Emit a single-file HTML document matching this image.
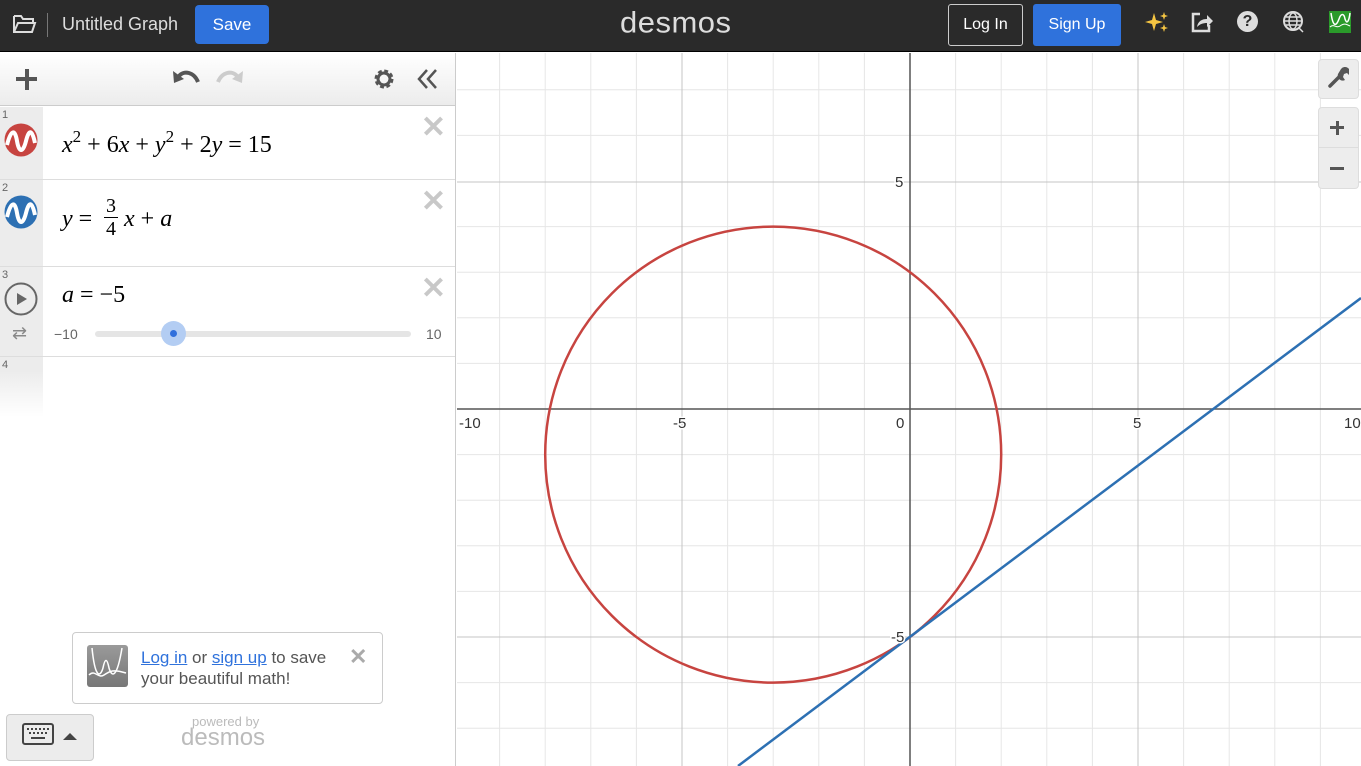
<!DOCTYPE html>
<html><head><meta charset="utf-8"><style>
*{box-sizing:border-box;margin:0;padding:0}
body{width:1361px;height:766px;overflow:hidden;font-family:"Liberation Sans",sans-serif;background:#fff;position:relative}
.top{position:absolute;left:0;top:0;width:1361px;height:52px;background:#2a2a2a;border-bottom:1px solid #000}
.abs{position:absolute}
.math{font-family:"Liberation Serif",serif;font-size:24px;color:#000;white-space:nowrap}
.math i{font-style:italic}
.math sup{font-size:17px;vertical-align:10px;line-height:0}
.x{position:absolute;right:9px;color:#c8c8c8;font-size:30px;font-weight:bold;line-height:1}
.num{position:absolute;left:2px;font-size:11px;color:#666}
.gut{position:absolute;left:0;width:43px;background:#ececec}
.row{position:absolute;left:0;width:455px;border-bottom:1px solid #ddd}
</style></head><body>
<div class="top">
 <svg class="abs" style="left:12px;top:13px" width="25" height="22" viewBox="0 0 25 22"><path d="M2 3h7l2 3h10v4M2 3v16h18l3-9H6L2 19" fill="none" stroke="#ddd" stroke-width="2"/></svg>
 <div class="abs" style="left:47px;top:13px;width:1px;height:24px;background:#777"></div>
 <div class="abs" style="left:62px;top:14px;color:#ddd;font-size:18px">Untitled Graph</div>
 <div class="abs" style="left:195px;top:5px;width:74px;height:39px;background:#2f72dc;border-radius:4px;color:#fff;font-size:17px;text-align:center;line-height:39px">Save</div>
 <div class="abs" style="left:620px;top:5px;color:#ddd;font-size:31px;letter-spacing:0.5px;transform:scaleY(0.95)">desmos</div>
 <div class="abs" style="left:948px;top:4px;width:75px;height:42px;border:1px solid #ccc;border-radius:3px;color:#fff;font-size:16px;text-align:center;line-height:40px">Log In</div>
 <div class="abs" style="left:1033px;top:4px;width:88px;height:42px;background:#2f72dc;border-radius:3px;color:#fff;font-size:16px;text-align:center;line-height:42px">Sign Up</div>
 <svg class="abs" style="left:1145px;top:11px" width="24" height="22" viewBox="0 0 24 22"><path d="M9 2l2 7 7 2-7 2-2 7-2-7-7-2 7-2z M19 1l1 3 3 1-3 1-1 3-1-3-3-1 3-1z M19 13l1 3 3 1-3 1-1 3-1-3-3-1 3-1z" fill="#f5c542"/></svg>
 <svg class="abs" style="left:1190px;top:11px" width="24" height="22" viewBox="0 0 24 22"><path d="M10 3H3v17h16v-6" fill="none" stroke="#ddd" stroke-width="2.5"/><path d="M7 16c1-6 5-8 10-8V4l6 6-6 6v-4c-4 0-7 1-10 4z" fill="#ddd"/></svg>
 <div class="abs" style="left:1237px;top:11px;width:21px;height:21px;border-radius:50%;background:#ddd;color:#2a2a2a;font-weight:bold;font-size:16px;text-align:center;line-height:21px">?</div>
 <svg class="abs" style="left:1282px;top:10px" width="24" height="24" viewBox="0 0 24 24"><circle cx="11" cy="11" r="9" fill="none" stroke="#ddd" stroke-width="2"/><ellipse cx="11" cy="11" rx="4" ry="8" fill="none" stroke="#ddd" stroke-width="1.5"/><path d="M3 11h16M4 7h14M4 15h14M17 18l4 4" stroke="#ddd" stroke-width="1.5"/></svg>
 <svg class="abs" style="left:1329px;top:11px" width="22" height="22" viewBox="0 0 22 22"><rect width="22" height="22" fill="#2a9a2a"/><path d="M2 2c2 14 5 14 8 6 2-6 5-6 6 0 2 6 4 2 5-6" fill="none" stroke="#fff" stroke-width="1.5"/><path d="M1 16c4-4 6 2 10-1s6-2 10 0" fill="none" stroke="#fff" stroke-width="1"/></svg>
</div>
<!-- left panel -->
<div class="abs" style="left:0;top:53px;width:456px;height:713px;border-right:1px solid #ccc;background:#fff">
 <div class="abs" style="left:0;top:0;width:455px;height:53px;background:linear-gradient(#fff,#ececec);border-bottom:1px solid #ccc"></div>
 <div class="abs" style="left:16px;top:24px;width:21px;height:4px;background:#555"></div>
 <div class="abs" style="left:24.5px;top:15.5px;width:4px;height:21px;background:#555"></div>
 <svg class="abs" style="left:172px;top:15px" width="28" height="18" viewBox="0 0 28 18"><path d="M26 14C22 4 12 2 7 8" fill="none" stroke="#555" stroke-width="4"/><path d="M1 3l1 12 10-4z" fill="#555"/></svg>
 <svg class="abs" style="left:216px;top:15px" width="28" height="18" viewBox="0 0 28 18"><path d="M2 14C6 4 16 2 21 8" fill="none" stroke="#ccc" stroke-width="4"/><path d="M27 3l-1 12-10-4z" fill="#ccc"/></svg>
 <svg class="abs" style="left:373px;top:15px" width="22" height="22" viewBox="0 0 22 22"><circle cx="11" cy="11" r="7" fill="none" stroke="#555" stroke-width="5" stroke-dasharray="3.3 2.2"/><circle cx="11" cy="11" r="6" fill="none" stroke="#555" stroke-width="3"/></svg>
 <svg class="abs" style="left:417px;top:15px" width="22" height="22" viewBox="0 0 22 22"><path d="M10 2L2 11l8 9M19 2l-8 9 8 9" fill="none" stroke="#555" stroke-width="2.5"/></svg>
 <!-- rows -->
 <div class="gut" style="top:54px;height:310px;background:linear-gradient(#ececec 85%,#fff)"></div>
 <div class="row" style="top:54px;height:73px"></div>
 <div class="num" style="top:56px">1</div>
 <svg class="abs" style="left:4px;top:70px" width="34" height="34" viewBox="0 0 34 34"><circle cx="17" cy="17" r="16.5" fill="#c74440"/><path d="M3 22c4-16 8-16 10-4s6 12 9 0 6-12 9 2" fill="none" stroke="#fff" stroke-width="4"/></svg>
 <div class="abs math" style="left:62px;top:79px"><i>x</i><sup>2</sup> + 6<i>x</i> + <i>y</i><sup>2</sup> + 2<i>y</i> = 15</div>
 <div class="x" style="top:60px">✕</div>
 <div class="row" style="top:127px;height:87px"></div>
 <div class="num" style="top:129px">2</div>
 <svg class="abs" style="left:4px;top:142px" width="34" height="34" viewBox="0 0 34 34"><circle cx="17" cy="17" r="16.5" fill="#2d70b3"/><path d="M3 22c4-16 8-16 10-4s6 12 9 0 6-12 9 2" fill="none" stroke="#fff" stroke-width="4"/></svg>
 <div class="abs math" style="left:62px;top:153px"><i>y</i> =</div>
 <div class="abs math" style="left:104px;top:142px;font-size:20px;text-align:center;width:14px;line-height:22px">3<div style="border-top:1px solid #000;line-height:22px">4</div></div>
 <div class="abs math" style="left:124px;top:153px"><i>x</i> + <i>a</i></div>
 <div class="x" style="top:134px">✕</div>
 <div class="row" style="top:214px;height:90px"></div>
 <div class="num" style="top:216px">3</div>
 <svg class="abs" style="left:4px;top:229px" width="34" height="34" viewBox="0 0 34 34"><circle cx="17" cy="17" r="15.5" fill="none" stroke="#666" stroke-width="2"/><path d="M13 11v12l10-6z" fill="#666"/></svg>
 <div class="abs" style="left:12px;top:270px;color:#888;font-size:18px">⇄</div>
 <div class="abs math" style="left:62px;top:229px"><i>a</i> = −5</div>
 <div class="x" style="top:221px">✕</div>
 <div class="abs" style="left:54px;top:273px;font-size:14px;color:#666">−10</div>
 <div class="abs" style="left:426px;top:273px;font-size:14px;color:#666">10</div>
 <div class="abs" style="left:95px;top:278px;width:316px;height:6px;border-radius:3px;background:#e5e5e5"></div>
 <div class="abs" style="left:161px;top:268px;width:25px;height:25px;border-radius:50%;background:#b3cdf3"></div>
 <div class="abs" style="left:170px;top:277px;width:7px;height:7px;border-radius:50%;background:#2f6fdc"></div>
 <div class="num" style="top:306px">4</div>
 <!-- toast -->
 <div class="abs" style="left:72px;top:579px;width:311px;height:72px;border:1px solid #ccc;border-radius:4px;background:#fff"></div>
 <svg class="abs" style="left:87px;top:592px" width="41" height="42" viewBox="0 0 41 42"><defs><linearGradient id="g" x1="0" y1="0" x2="0" y2="1"><stop offset="0" stop-color="#9a9a9a"/><stop offset="1" stop-color="#777"/></linearGradient></defs><rect width="41" height="42" rx="3" fill="url(#g)"/><path d="M5 3c3 30 8 30 11 20 2-10 4-10 6 0 3 10 8 10 13-20" fill="none" stroke="#fff" stroke-width="1.5"/><path d="M2 30c6-6 9 4 15 0s9-6 22-2" fill="none" stroke="#fff" stroke-width="1.5"/></svg>
 <div class="abs" style="left:141px;top:594px;font-size:17px;color:#555;line-height:21px"><span style="color:#2f72dc;text-decoration:underline">Log in</span> or <span style="color:#2f72dc;text-decoration:underline">sign up</span> to save<br>your beautiful math!</div>
 <div class="abs" style="left:349px;top:591px;color:#aaa;font-size:22px;font-weight:bold">✕</div>
 <div class="abs" style="left:192px;top:661px;font-size:13px;color:#bbb">powered by</div>
 <div class="abs" style="left:181px;top:672px;font-size:24px;color:#bbb;line-height:26px">desmos</div>
 <div class="abs" style="left:6px;top:661px;width:88px;height:47px;border:1px solid #ccc;border-radius:4px;background:#ececec"></div>
 <svg class="abs" style="left:22px;top:670px" width="32" height="22" viewBox="0 0 32 22"><rect x="1" y="1" width="30" height="20" rx="2" fill="none" stroke="#444" stroke-width="2"/><path d="M5 6h2M9 6h2M13 6h2M17 6h2M21 6h2M25 6h2M7 10h2M11 10h2M15 10h2M19 10h2M23 10h2M9 15h14" stroke="#444" stroke-width="2"/></svg>
 <svg class="abs" style="left:62px;top:678px" width="16" height="10"><path d="M1 9l7-7 7 7z" fill="#444"/></svg>
</div>
<!-- graph -->
<svg class="abs" style="left:0;top:0" width="1361" height="766">
 <defs><clipPath id="c"><rect x="457" y="53" width="904" height="713"/></clipPath></defs>
 <g clip-path="url(#c)">
  <g stroke="#e6e6e6" stroke-width="1">
   <path d="M499.6 53V766M545.2 53V766M590.8 53V766M636.4 53V766M727.6 53V766M773.2 53V766M818.8 53V766M864.4 53V766M955.6 53V766M1001.2 53V766M1046.8 53V766M1092.4 53V766M1183.6 53V766M1229.2 53V766M1274.8 53V766M1320.4 53V766"/>
   <path d="M457 89.8H1361M457 135.4H1361M457 226.6H1361M457 272.2H1361M457 317.8H1361M457 363.4H1361M457 454.6H1361M457 500.2H1361M457 545.8H1361M457 591.4H1361M457 682.6H1361M457 728.2H1361"/>
  </g>
  <g stroke="#c4c4c4" stroke-width="1"><path d="M682 53V766M1138 53V766M457 182H1361M457 637H1361"/></g>
  <g stroke="#555" stroke-width="1.5"><path d="M910 53V766M457 409H1361"/></g>
  <circle cx="773.2" cy="454.6" r="228" fill="none" stroke="#c74440" stroke-width="2.5"/>
  <path d="M738 766L1361 298" stroke="#2d70b3" stroke-width="2.5"/>
 </g>
 <g font-family="Liberation Sans,sans-serif" font-size="15" fill="#333" stroke="#fff" stroke-width="3" paint-order="stroke">
  <text x="459" y="428">-10</text><text x="673" y="428">-5</text><text x="896" y="428">0</text><text x="1133" y="428">5</text><text x="1344" y="428">10</text>
  <text x="895" y="187">5</text><text x="891" y="642">-5</text>
 </g>
</svg>
<div class="abs" style="left:1318px;top:59px;width:41px;height:40px;background:#ededed;border:1px solid #ddd;border-radius:4px"></div>
<svg class="abs" style="left:1327px;top:67px" width="22" height="22" viewBox="0 0 22 22"><path d="M3 19l9-9" stroke="#555" stroke-width="3.5" stroke-linecap="round"/><path d="M11 7a5 5 0 0 0 7 6l-2-3 1-3 3-1 2 2a5 5 0 0 0-8-6z" fill="#555"/></svg>
<div class="abs" style="left:1318px;top:107px;width:41px;height:82px;background:#ededed;border:1px solid #ddd;border-radius:4px"></div>
<div class="abs" style="left:1319px;top:147px;width:39px;height:1px;background:#ddd"></div>
<div class="abs" style="left:1330px;top:126px;width:14px;height:3px;background:#555"></div>
<div class="abs" style="left:1335.5px;top:120.5px;width:3px;height:14px;background:#555"></div>
<div class="abs" style="left:1330px;top:167px;width:14px;height:3px;background:#555"></div>
</body></html>
